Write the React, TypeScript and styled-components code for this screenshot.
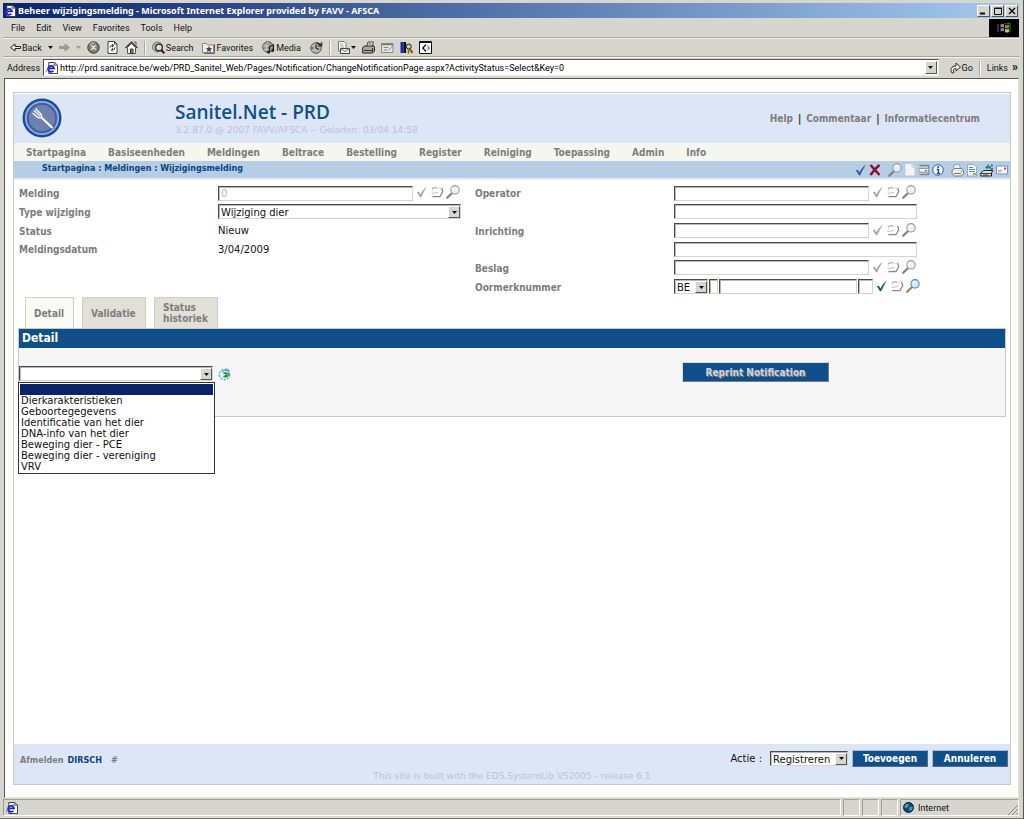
import React from "react";
import styled, { createGlobalStyle, css } from "styled-components";

const pageFont = '"DejaVu Sans", Verdana, sans-serif';
const condensedFont = '"DejaVu Sans Condensed", "DejaVu Sans", Verdana, sans-serif';
const titleFont = '"Noto Sans", Tahoma, sans-serif';
const chromeFont = 'Roboto, Tahoma, sans-serif';

const c = {
  chrome: "#d6d6ce",
  navy: "#0a246a",
  blue: "#10508a",
  pale: "#dde6f7",
  crumb: "#b5cee6",
  label: "#7d7d7d",
  line: "#c8cac2",
};

const GlobalStyle = createGlobalStyle`
  *, *::before, *::after { box-sizing: border-box; }
  body { margin: 0; background: ${c.chrome}; font-family: ${pageFont}; font-size: 10px; color: #111; }
  a { color: inherit; text-decoration: none; }
  button, input, select { font: inherit; margin: 0; border-radius: 0; }
  svg { display: block; flex: none; }
`;

/* ---------- browser window ---------- */

const Window = styled.div`
  display: flex;
  flex-direction: column;
  min-height: 100vh;
  padding: 3px 4px 2px 3px;
  background: ${c.chrome};
  border-right: 1px solid #55554f;
  border-bottom: 1px solid #77776f;
  font-family: ${chromeFont};
  font-size: 9px;
`;

const TitleBar = styled.header`
  display: flex;
  align-items: center;
  gap: 2px;
  height: 15px;
  padding: 0 1px;
  color: #fff;
  background: linear-gradient(to right, #0a246a, #a6caf0);
`;

const WindowTitle = styled.h1`
  flex: 1;
  margin: 0;
  font-family: ${titleFont};
  font-size: 9px;
  line-height: 15px;
  font-weight: 700;
  white-space: nowrap;
`;

const raised = css`
  background: ${c.chrome};
  border: 1px solid;
  border-color: #fff #55554f #55554f #fff;
`;

const WindowButton = styled.button`
  ${raised}
  display: grid;
  place-items: center;
  width: 13px;
  height: 12px;
  padding: 0;
  & + & { margin-left: -1px; }
`;

const MenuRow = styled.div`
  display: flex;
  align-items: stretch;
  height: 20px;
  border-bottom: 1px solid #a5a59d;
`;

const MenuBar = styled.nav`
  display: flex;
  flex: 1;
  align-items: center;
  gap: 11px;
  padding-left: 8px;
`;

const FlagBox = styled.div`
  display: grid;
  place-items: center;
  width: 30px;
  margin-top: 1px;
  background: #000;
`;

const PlainButton = styled.button`
  display: flex;
  align-items: center;
  gap: 1px;
  padding: 0;
  border: 0;
  background: none;
  color: inherit;
  white-space: nowrap;
`;

const Toolbar = styled.div`
  display: flex;
  align-items: center;
  gap: 6px;
  height: 19px;
  padding-left: 7px;
  border-top: 1px solid #f4f4f0;
  border-bottom: 1px solid #a5a59d;
`;

const ToolGroup = styled.div<{ $gap: number }>`
  display: flex;
  align-items: center;
  gap: ${(p) => p.$gap}px;
`;

const Divider = styled.span`
  width: 2px;
  height: 14px;
  border-left: 1px solid #a5a59d;
  border-right: 1px solid #fff;
`;

const AddressRow = styled.form`
  display: flex;
  align-items: center;
  gap: 3px;
  height: 20px;
  margin-bottom: 1px;
  padding: 1px 1px 1px 4px;
  border-top: 1px solid #f4f4f0;
`;

const AddressField = styled.div`
  display: flex;
  flex: 1;
  align-items: center;
  height: 17px;
  padding-left: 2px;
  background: #fff;
  border: 1px solid;
  border-color: #55554f #eee #eee #55554f;
`;

const AddressInput = styled.input`
  flex: 1;
  min-width: 0;
  padding: 0 2px;
  border: 0;
  background: transparent;
  outline: 0;
`;

const DropButton = styled.button`
  ${raised}
  display: grid;
  place-items: center;
  width: 12px;
  height: 13px;
  margin-right: 1px;
  padding: 0;
`;

const GoArea = styled.div`
  display: flex;
  align-items: center;
  gap: 6px;
  padding-left: 8px;
`;

const LinksMark = styled.b`
  align-self: flex-start;
  margin-left: 3px;
  font-size: 12px;
  line-height: 8px;
`;

const Viewport = styled.main`
  display: flex;
  flex: 1;
  flex-direction: column;
  margin-left: 1px;
  padding: 13px 7px 12px 8px;
  background: #fff;
  border: 1px solid;
  border-color: #55554f #e4e4dc #e4e4dc #55554f;
  font-family: ${pageFont};
  font-size: 10px;
`;

const StatusBar = styled.footer`
  display: flex;
  gap: 2px;
  height: 17px;
  margin-top: 1px;
`;

const StatusCell = styled.div<{ $width?: number }>`
  display: flex;
  align-items: center;
  gap: 4px;
  padding-left: 2px;
  border: 1px solid;
  border-color: #a0a098 #fff #fff #a0a098;
  ${(p) => (p.$width ? `width: ${p.$width}px;` : "flex: 1;")}
`;

const Grip = styled.svg`
  align-self: flex-end;
  margin-left: auto;
`;

/* ---------- Sanitel page ---------- */

const Frame = styled.div`
  display: flex;
  flex: 1;
  flex-direction: column;
  border: 1px solid ${c.line};
`;

const Banner = styled.header`
  display: flex;
  align-items: flex-start;
  height: 49px;
  margin-top: 1px;
  padding: 4px 30px 0 8px;
  background: ${c.pale};
`;

const Brand = styled.div`
  flex: 1;
  padding: 4px 0 0 113px;
`;

const BrandTitle = styled.h2`
  margin: 0;
  color: ${c.blue};
  font: 600 19px/20px "Open Sans", "Trebuchet MS", sans-serif;
`;

const FaintText = styled.p`
  margin: 0;
  padding-top: 2px;
  color: #bcc3cf;
  font-size: 9px;
  line-height: 12px;
`;

const BannerLinks = styled.div`
  display: flex;
  gap: 5px;
  padding-top: 15px;
  color: #222;
  font-family: ${condensedFont};
  font-weight: 700;
`;

const GreyLink = styled.a`
  color: ${c.label};
  font-family: ${condensedFont};
  font-weight: 700;
  white-space: nowrap;
`;

const NavBar = styled.nav`
  display: flex;
  align-items: center;
  gap: 22px;
  height: 18px;
  padding-left: 12px;
  background: #f6f6f0;
`;

const CrumbBar = styled.div`
  display: flex;
  align-items: center;
  justify-content: space-between;
  height: 19px;
  padding: 0 2px 0 28px;
  background: ${c.crumb};
  border-bottom: 2px solid #e4edf8;
`;

const Crumbs = styled.nav`
  padding-bottom: 3px;
  color: #0c4280;
  font-size: 8px;
  font-weight: 700;
`;

const IconRow = styled.div<{ $gap?: number }>`
  display: flex;
  align-items: center;
  gap: ${(p) => p.$gap ?? 1}px;
`;

const IconButton = styled.button`
  display: block;
  padding: 0;
  border: 0;
  background: none;
`;

const FormArea = styled.form`
  display: grid;
  grid-template-columns: 456px 1fr;
  padding: 4px 5px 0;
`;

const FormColumn = styled.div`
  display: grid;
  grid-template-rows: repeat(6, 1fr);
  height: 112px;
`;

const FormRow = styled.div`
  display: flex;
  align-items: center;
`;

const FieldLabel = styled.label`
  width: 199px;
  padding-top: 1px;
  color: ${c.label};
  font-family: ${condensedFont};
  font-weight: 700;
`;

const sunken = css`
  height: 15px;
  background: #fff;
  border: 1px solid;
  border-color: #4a4a4a #d4d4d0 #d4d4d0 #4a4a4a;
  box-shadow: inset 1px 1px 0 #b8b8b4;
`;

const TextInput = styled.input<{ $width: number }>`
  ${sunken}
  width: ${(p) => p.$width}px;
  padding: 0 2px;
  color: #111;
  &:disabled { color: #b4b4b4; }
`;

const SelectWrap = styled.span<{ $width: number }>`
  ${sunken}
  position: relative;
  display: block;
  width: ${(p) => p.$width}px;
`;

const NativeSelect = styled.select`
  display: block;
  width: 100%;
  height: 14px;
  padding: 1px 12px 0 2px;
  border: 0;
  appearance: none;
  background: transparent;
  color: #111;
`;

const SelectArrow = styled.span`
  ${raised}
  position: absolute;
  top: 1px;
  right: 0;
  display: grid;
  place-items: center;
  width: 12px;
  height: 12px;
  pointer-events: none;
`;

const FieldIcons = styled.div`
  display: flex;
  align-items: center;
  gap: 2px;
  margin-left: 3px;
  padding-bottom: 2px;
`;

const Joined = styled.div`
  display: flex;
  gap: 1px;
`;

const Tabs = styled.div`
  display: flex;
  gap: 8px;
  padding: 1px 11px 0;
`;

const Tab = styled.button<{ $active?: boolean }>`
  min-width: ${(p) => (p.$active ? 49 : 64)}px;
  height: 31px;
  padding: 0 8px;
  border: 1px solid #d0d0c4;
  border-bottom: 0;
  background: ${(p) => (p.$active ? "#fafaf6" : "#e2dfd6")};
  color: ${c.label};
  font-family: ${condensedFont};
  font-weight: 700;
  line-height: 11px;
  text-align: left;
`;

const Panel = styled.section`
  margin: 0 4px;
  border: 1px solid ${c.line};
  background: #f6f6f6;
`;

const PanelTitle = styled.h3`
  margin: 0;
  padding-left: 3px;
  background: ${c.blue};
  color: #fff;
  font: 700 12px/19px ${condensedFont};
`;

const PanelBody = styled.div`
  display: grid;
  grid-template-columns: 663px 1fr;
  align-items: start;
  height: 68px;
  padding-top: 14px;
`;

const DetailPicker = styled.div`
  position: relative;
  display: flex;
  align-items: center;
  gap: 5px;
  padding-top: 4px;
`;

const OptionList = styled.ul`
  position: absolute;
  z-index: 1;
  top: 20px;
  left: -1px;
  width: 197px;
  margin: 0;
  padding: 1px;
  border: 1px solid #333;
  background: #fff;
  list-style: none;
`;

const Option = styled.li<{ $selected?: boolean }>`
  height: 11px;
  padding-left: 1px;
  background: ${(p) => (p.$selected ? c.navy : "transparent")};
  line-height: 12px;
`;

const BlueButton = styled.button<{ $width: number; $muted?: boolean }>`
  width: ${(p) => p.$width}px;
  height: ${(p) => (p.$muted ? 20 : 17)}px;
  padding: 0;
  border: 1px solid;
  border-color: ${(p) => (p.$muted ? "#dcdcdc #7c7c7c #7c7c7c #dcdcdc" : "#a8c0dc #5c6c80 #5c6c80 #a8c0dc")};
  background: ${c.blue};
  color: ${(p) => (p.$muted ? "#d0d4d8" : "#fff")};
  font-family: ${condensedFont};
  font-weight: 700;
  text-shadow: ${(p) => (p.$muted ? "1px 1px 0 #7c8088" : "none")};
`;

const PageFooter = styled.footer`
  margin-top: auto;
  background: ${c.pale};
`;

const FooterMain = styled.div`
  display: flex;
  align-items: center;
  justify-content: space-between;
  height: 24px;
  padding: 4px 2px 0 6px;
`;

const BuildNote = styled(FaintText)`
  padding-bottom: 2px;
  text-align: center;
`;

const UserInfo = styled.div`
  display: flex;
  gap: 4px;
  padding-top: 4px;
  color: ${c.label};
  font-family: ${condensedFont};
  font-size: 9px;
  font-weight: 700;
`;

const UserName = styled.strong`
  margin-right: 5px;
  color: #0c4280;
`;

const Actions = styled.div`
  display: flex;
  align-items: center;
  gap: 4px;
`;

const ActionLabel = styled.label`
  margin-right: 4px;
`;

/* ---------- drawings ---------- */

const Caret = ({ color = "#111" }: { color?: string }) => (
  <svg width="5" height="3" viewBox="0 0 5 3"><path d="M0 0h5L2.5 3z" fill={color} /></svg>
);

const PageE = ({ size = 13 }: { size?: number }) => (
  <svg width={size} height={size} viewBox="0 0 13 13">
    <path d="M3 .5h6.500l3 3v9H3z" fill="#fff" stroke="#333" />
    <path d="M9.500 .5v3h3" fill="none" stroke="#555" />
    <path d="M8 9.500A3.200 3.200 0 1 1 8.700 6.900H3" fill="none" stroke="#2020c8" strokeWidth="2" />
    <path d="M.6 10.500C1 7 5 3.200 9.500 3.200" fill="none" stroke="#3c50e0" />
  </svg>
);

const Flag = () => (
  <svg width="14" height="12" viewBox="0 0 14 12">
    <path d="M3.500 2.500q2-1.500 3.500 0v3.200q-2-1.300-3.500 0z" fill="#d87048" />
    <path d="M8 2.700q2 1.200 4-.2v3.200q-2 1.300-4 .2z" fill="#58a048" />
    <path d="M3.500 6.600q2-1.300 3.500 0v3q-1.800-1.300-3.500 0z" fill="#6888d8" />
    <path d="M8 6.700q2 1.300 4 0v3.200q-2 1.200-4 0z" fill="#d8c050" />
    <path d="M0 3h2M0 5h2M0 7h2M0 9h2" stroke="#785888" />
    <path d="M7.500 1.500q2 1.200 5.500-.5v9" fill="none" stroke="#487838" />
  </svg>
);

const Arrow = ({ flip = false, color = "#222" }: { flip?: boolean; color?: string }) => (
  <svg width="11" height="9" viewBox="0 0 11 9">
    <path
      d={flip ? "M.5 3.500h5.500V1l4.500 3.500L6 8V5.500H.5z" : "M10.500 3.500H5V1L.5 4.500 5 8V5.500h5.500z"}
      fill={flip ? color : "#f4f4f0"}
      stroke={color}
    />
  </svg>
);

const tools: Record<string, React.ReactNode> = {
  stop: (<>
    <circle cx="6.500" cy="6.500" r="5.700" fill="#80807c" stroke="#333" />
    <path d="M2.500 4q2-3 5-2" stroke="#ddd" fill="none" />
    <path d="M4.300 4.300l4.400 4.400m0-4.400L4.300 8.700" stroke="#e8e8e8" strokeWidth="1.300" />
  </>),
  refresh: (<>
    <path d="M2 .5h6.500l2.500 2.500v9.500H2z" fill="#fff" stroke="#444" />
    <path d="M8.500 .5V3H11" stroke="#444" fill="none" />
    <path d="M4 6.500q.3-2.300 3.200-2M6 3l1.700 1.500L6 6M9 6.500Q8.700 9.200 5.800 8.800M7 7.300L5.300 8.800 7 10.500" stroke="#333" fill="none" />
  </>),
  home: (<>
    <path d="M2.500 6.500v6h8v-6l-4-4z" fill="#fff" stroke="#555" />
    <path d="M.5 7l6-6 6 6" fill="none" stroke="#333" strokeWidth="1.200" />
    <path d="M9 1h2v3.500" fill="none" stroke="#555" />
    <path d="M5.500 8h2.500v4.500H5.500z" fill="#888" stroke="#333" />
  </>),
  search: (<>
    <circle cx="5.500" cy="6" r="5" fill="#b4b4ac" stroke="#777" />
    <path d="M2 3q3 0 2 3t1 4M8 1q-2 3 2 4" stroke="#888" fill="none" />
    <circle cx="7" cy="6.500" r="3.300" fill="#ddd" stroke="#222" strokeWidth="1.200" />
    <path d="M9.300 9l3 3.300" stroke="#222" strokeWidth="2" />
  </>),
  favorites: (<>
    <path d="M.5 2.500h4l1 1.500h6v7.500H.5z" fill="#eee" stroke="#888" />
    <path d="M12.500 3v9.500H2" stroke="#666" fill="none" />
    <path d="M7 5l.9 2 2.300.3-1.700 1.500.5 2.300L7 10l-2 1.100.5-2.300L3.800 7.300 6.100 7z" fill="#444" />
  </>),
  media: (<>
    <circle cx="6" cy="6" r="5.300" fill="#9c9c96" stroke="#555" />
    <path d="M1 5h10M2 9h8M6 1q-4 5 0 10" stroke="#ccc" fill="none" />
    <path d="M7.500 11V5.500l4-1.500v5.500" stroke="#222" fill="none" strokeWidth="1.200" />
    <circle cx="6.600" cy="11" r="1.600" fill="#222" /><circle cx="10.600" cy="9.500" r="1.500" fill="#222" />
  </>),
  history: (<>
    <circle cx="6" cy="7" r="5.300" fill="#b8b8b2" stroke="#555" />
    <path d="M6 3.500V7l3 1.500M1.500 7h2" stroke="#222" fill="none" strokeWidth="1.200" />
    <path d="M12.300 .5v5h-5l1.700-1.600L6 2.500l1-1.300L10.500 2.500z" fill="#333" />
  </>),
  mail: (<>
    <path d="M1.500 .5h5.500l2 2v7.500h-7.500z" fill="#fff" stroke="#777" />
    <path d="M3 3h3M3 5h4M3 7h4" stroke="#999" />
    <path d="M3.500 7.500h9v5h-9z" fill="#eee" stroke="#444" /><path d="M3.500 7.500L8 10.500l4.500-3" stroke="#777" fill="none" />
  </>),
  print: (<>
    <path d="M4.500 6L6 1h5.500L10 6z" fill="#fff" stroke="#444" />
    <path d="M.7 6.500L3 5h9l.5 1.500v3.500l-2 2h-9.800z" fill="#a8a8a4" stroke="#222" />
    <path d="M2 9.500h8M6.500 3H9.500" stroke="#333" /><path d="M10.500 7v4.500" stroke="#333" />
  </>),
  edit: (<>
    <path d="M.5 2.500h11.500v9H.5z" fill="#e8e8e4" stroke="#888" />
    <path d="M.5 3.500h11.500" stroke="#777" strokeWidth="1.500" />
    <path d="M2.500 6.500h5M2.500 9h4M7.500 9.500l4.500-5" stroke="#888" />
  </>),
  research: (<>
    <path d="M.5 1h3v11h-3z" fill="#1428c8" /><path d="M3.500 1H6v11H3.500z" fill="#111" />
    <path d="M6 2h1.500v10H6z" fill="#e8d020" />
    <circle cx="8.800" cy="5.500" r="2.500" fill="#a8d8d0" stroke="#222" /><path d="M10 8l2.500 4" stroke="#c82818" strokeWidth="2" />
    <path d="M8.500 8.500v4" stroke="#208830" strokeWidth="1.500" />
  </>),
  discuss: (<>
    <path d="M.5 .5h12v12H.5z" fill="#fff" stroke="#111" /><path d="M.5 1.500h12" stroke="#111" />
    <path d="M7 3.500L3.800 7 7 10.500" fill="none" stroke="#111" strokeWidth="1.300" /><path d="M7.500 7h3M8.500 4.500l2 2.500-2 2.500" stroke="#777" fill="none" />
  </>),
};

const Tool = ({ name }: { name: string }) => (
  <svg width="13" height="13" viewBox="0 0 13 13">{tools[name]}</svg>
);

const Logo = () => (
  <svg width="40" height="40" viewBox="0 0 40 40">
    <circle cx="20" cy="20" r="19.500" fill="#1c4d94" />
    <circle cx="20" cy="20" r="16.300" fill="#5d78b0" stroke="#8fb4ea" strokeWidth="1.500" />
    <circle cx="20" cy="20" r="14" fill="#6e80ae" stroke="#3c5c9c" strokeWidth="1.500" />
    <path d="M19 19L30.500 30" stroke="#fff" strokeWidth="2" />
    <path d="M10.500 15l5.500 4.500q2 .8 3-.2t0-3.200L13.500 10.500M12 12.500l6 5.500" fill="none" stroke="#f2f5fb" strokeWidth="1.500" />
  </svg>
);

const Check = ({ color = "#a8a8a8" }: { color?: string }) => (
  <svg width="12" height="12" viewBox="0 0 12 12">
    <path d="M.8 6.300l2-.5L4.500 8.600C5.500 6 7.500 3 11 .6 8.800 4 6.800 7.500 5.200 11.300H4z" fill={color} />
  </svg>
);

const Folder = () => (
  <svg width="14" height="12" viewBox="0 0 14 12">
    <path d="M2.500 5.500L2 2.500l4-1 1 .8 4.500-.5 1 3.500-2.500 5H2" fill="#fdfdfd" stroke="#dadada" />
    <path d="M2 2.500l4-1 1 .8" fill="none" stroke="#a8a8a8" />
    <path d="M1.500 7.500l6.500-1" stroke="#c0c0c0" />
    <path d="M2.500 10.700h7.500l2.700-5-1-3.500" stroke="#888" fill="none" strokeWidth="1.200" />
  </svg>
);

const Lens = ({ rim = "#9a9a9a", handle = "#808080", glass = "#f0f2f4" }) => (
  <svg width="14" height="14" viewBox="0 0 14 14">
    <path d="M5.800 8.200L1.200 12.800" stroke={handle} strokeWidth="2.200" strokeLinecap="round" />
    <circle cx="9" cy="4.800" r="4.200" fill={glass} stroke={rim} strokeWidth="1.100" />
    <path d="M7 4.500q.5-2 2.500-2" stroke="#fff" fill="none" />
  </svg>
);

const Cross = () => (
  <svg width="12" height="12" viewBox="0 0 12 12">
    <path d="M1.500 1l9 10M10.500 1Q6 4.500 1.500 11" stroke="#8c0c34" strokeWidth="2.500" fill="none" />
  </svg>
);

const Sheet = () => (
  <svg width="12" height="14" viewBox="0 0 12 14"><path d="M1.500 1h6.500l3 3v9H1.500z" fill="#f4f5f2" /><path d="M8 1v3h3M11 4v9H1.500" stroke="#c4c8c8" fill="none" /></svg>
);

const Drive = () => (
  <svg width="12" height="12" viewBox="0 0 12 12">
    <path d="M1.500 1.500h9v9h-9" fill="none" stroke="#84848c" strokeWidth="1.500" />
    <path d="M1 4.500h9.500v3.500H1z" fill="#f6f6f6" stroke="#9898a0" /><path d="M7 6.500h2" stroke="#c04040" />
  </svg>
);

const Info = () => (
  <svg width="12" height="12" viewBox="0 0 12 12">
    <circle cx="6" cy="6" r="5.300" fill="#f6f9ff" stroke="#3a60b4" />
    <path d="M4.800 5.500H6.500v4M4.800 9.500h3.200" stroke="#1c3ca8" fill="none" strokeWidth="1.300" /><circle cx="6.200" cy="3" r="1" fill="#1c3ca8" />
  </svg>
);

const PrinterSmall = () => (
  <svg width="13" height="14" viewBox="0 0 13 14">
    <path d="M3 7l-.5-5L8 1l2 5.500z" fill="#e4f0fc" stroke="#8ca4c4" />
    <path d="M1 8l2-2.500h8L12.500 8v3L10 13H3.500L1 11z" fill="#ececec" stroke="#808080" />
    <path d="M3 10.500h7" stroke="#777" /><circle cx="10.500" cy="8.500" r=".8" fill="#58a048" />
  </svg>
);

const Report = () => (
  <svg width="12" height="14" viewBox="0 0 12 14">
    <path d="M1.500 1.500h6.500l2.500 2.500v9h-9z" fill="#f4f9ff" stroke="#90a8cc" />
    <path d="M3 4.500h4M3 6.500h6M3 8.500h6" stroke="#4c88cc" /><path d="M7 10h3v2H7z" fill="#b8a838" />
  </svg>
);

const Router = () => (
  <svg width="14" height="14" viewBox="0 0 14 14">
    <path d="M.8 10l3-2.500h9L11.500 10v3H.8z" fill="#e0e0d8" stroke="#222" /><path d="M1 10.500h10M3 12h5" stroke="#444" />
    <path d="M5 4.500l4-3.500v2.500l3-1-2 4-1-1.500-2 1z" fill="#108898" /><path d="M11 1.500l2 1.500M10.500 6.500l2.500-1" stroke="#108898" strokeWidth="1.500" />
  </svg>
);

const Envelope = () => (
  <svg width="12" height="10" viewBox="0 0 12 10">
    <path d="M.5 1h11v8H.5z" fill="#f8faff" stroke="#7890bc" /><path d="M2 5.500h4M2 7h3" stroke="#a0a8b8" /><path d="M8 2.500h2v2H8z" fill="#d03838" />
  </svg>
);

const Recycle = () => (
  <svg width="14" height="14" viewBox="0 0 14 14">
    <circle cx="6.500" cy="7.500" r="5.300" fill="#e8f4f4" stroke="#3c6cac" strokeDasharray="2 1.500" />
    <path d="M4 5q3-3.500 6-1M9 1.500l2.500 3" stroke="#3c80c0" fill="none" />
    <path d="M5.500 6.500q3-1.500 3 .5T5.500 9.800H9l2-2.300" stroke="#18a050" strokeWidth="1.600" fill="none" /><path d="M9 5.500l3 .5-2 2.500z" fill="#18a050" />
  </svg>
);

const Globe = () => (
  <svg width="11" height="11" viewBox="0 0 11 11">
    <circle cx="5.500" cy="5.500" r="5" fill="#1838a8" stroke="#101c50" />
    <path d="M2 2.500l3-1 1 2-2 2.500-2.500-.5zM7 4.500l3 .5-1 3-2.500 1-.5-2.500z" fill="#38b058" />
  </svg>
);

/* ---------- composed parts ---------- */

const Select = ({ id, width, options, label }: { id?: string; width: number; options: string[]; label?: string }) => (
  <SelectWrap $width={width}>
    <NativeSelect id={id} aria-label={label}>
      {options.map((o) => <option key={o}>{o}</option>)}
    </NativeSelect>
    <SelectArrow><Caret /></SelectArrow>
  </SelectWrap>
);

const LookupIcons = ({ active = false }: { active?: boolean }) => (
  <FieldIcons>
    <IconButton type="button" aria-label="Valideren"><Check color={active ? "#1c5494" : undefined} /></IconButton>
    <IconButton type="button" aria-label="Openen"><Folder /></IconButton>
    <IconButton type="button" aria-label="Zoeken">
      {active ? <Lens rim="#4888c8" handle="#b07850" glass="#cfe8fa" /> : <Lens />}
    </IconButton>
  </FieldIcons>
);

const browserMenu = ["File", "Edit", "View", "Favorites", "Tools", "Help"];
const siteMenu = ["Startpagina", "Basiseenheden", "Meldingen", "Beltrace", "Bestelling", "Register", "Reiniging", "Toepassing", "Admin", "Info"];
const detailOptions = ["", "Dierkarakteristieken", "Geboortegegevens", "Identificatie van het dier", "DNA-info van het dier", "Beweging dier - PCE", "Beweging dier - vereniging", "VRV"];

const BrowserToolbar = () => (
  <Toolbar>
    <ToolGroup $gap={6}>
      <PlainButton><Arrow />Back</PlainButton>
      <Caret />
      <PlainButton aria-label="Forward"><Arrow flip color="#999" /></PlainButton>
      <Caret color="#999" />
      <IconButton aria-label="Stop"><Tool name="stop" /></IconButton>
      <IconButton aria-label="Refresh"><Tool name="refresh" /></IconButton>
      <IconButton aria-label="Home"><Tool name="home" /></IconButton>
    </ToolGroup>
    <Divider />
    <ToolGroup $gap={9}>
      <PlainButton><Tool name="search" />Search</PlainButton>
      <PlainButton><Tool name="favorites" />Favorites</PlainButton>
      <PlainButton><Tool name="media" />Media</PlainButton>
      <IconButton aria-label="History"><Tool name="history" /></IconButton>
    </ToolGroup>
    <Divider />
    <ToolGroup $gap={6}>
      <PlainButton aria-label="Mail"><Tool name="mail" /><Caret /></PlainButton>
      <IconButton aria-label="Print"><Tool name="print" /></IconButton>
      <IconButton aria-label="Edit"><Tool name="edit" /></IconButton>
      <IconButton aria-label="Research"><Tool name="research" /></IconButton>
      <IconButton aria-label="Discuss"><Tool name="discuss" /></IconButton>
    </ToolGroup>
  </Toolbar>
);

const NotificationForm = () => (
  <FormArea>
    <FormColumn>
      <FormRow>
        <FieldLabel htmlFor="melding">Melding</FieldLabel>
        <TextInput id="melding" $width={195} defaultValue="0" disabled />
        <LookupIcons />
      </FormRow>
      <FormRow>
        <FieldLabel htmlFor="type">Type wijziging</FieldLabel>
        <Select id="type" width={243} options={["Wijziging dier"]} />
      </FormRow>
      <FormRow><FieldLabel as="span">Status</FieldLabel>Nieuw</FormRow>
      <FormRow><FieldLabel as="span">Meldingsdatum</FieldLabel>3/04/2009</FormRow>
    </FormColumn>
    <FormColumn>
      <FormRow>
        <FieldLabel htmlFor="operator">Operator</FieldLabel>
        <TextInput id="operator" $width={195} />
        <LookupIcons />
      </FormRow>
      <FormRow>
        <FieldLabel as="span" />
        <TextInput aria-label="Operator naam" $width={243} />
      </FormRow>
      <FormRow>
        <FieldLabel htmlFor="inrichting">Inrichting</FieldLabel>
        <TextInput id="inrichting" $width={195} />
        <LookupIcons />
      </FormRow>
      <FormRow>
        <FieldLabel as="span" />
        <TextInput aria-label="Inrichting naam" $width={243} />
      </FormRow>
      <FormRow>
        <FieldLabel htmlFor="beslag">Beslag</FieldLabel>
        <TextInput id="beslag" $width={195} />
        <LookupIcons />
      </FormRow>
      <FormRow>
        <FieldLabel htmlFor="oormerk">Oormerknummer</FieldLabel>
        <Joined>
          <Select width={34} options={["BE"]} label="Landcode" />
          <TextInput aria-label="Voorvoegsel" $width={9} />
          <TextInput id="oormerk" $width={138} />
          <TextInput aria-label="Achtervoegsel" $width={15} />
        </Joined>
        <LookupIcons active />
      </FormRow>
    </FormColumn>
  </FormArea>
);

export default function App() {
  return (
    <>
      <GlobalStyle />
      <Window>
        <TitleBar>
          <PageE size={12} />
          <WindowTitle>Beheer wijzigingsmelding - Microsoft Internet Explorer provided by FAVV - AFSCA</WindowTitle>
          <WindowButton aria-label="Minimize"><svg width="7" height="8"><path d="M0 6.500h5" stroke="#111" strokeWidth="2" /></svg></WindowButton>
          <WindowButton aria-label="Maximize"><svg width="8" height="8"><path d="M.5 1h7v6.500h-7zM.5 1.500h7" fill="none" stroke="#111" /></svg></WindowButton>
          <WindowButton aria-label="Close"><svg width="8" height="8"><path d="M1 1l6 6M7 1L1 7" stroke="#111" strokeWidth="1.500" /></svg></WindowButton>
        </TitleBar>
        <MenuRow>
          <MenuBar>{browserMenu.map((m) => <PlainButton key={m}>{m}</PlainButton>)}</MenuBar>
          <FlagBox><Flag /></FlagBox>
        </MenuRow>
        <BrowserToolbar />
        <AddressRow>
          <label htmlFor="address">Address</label>
          <AddressField>
            <PageE size={12} />
            <AddressInput id="address" defaultValue="http://prd.sanitrace.be/web/PRD_Sanitel_Web/Pages/Notification/ChangeNotificationPage.aspx?ActivityStatus=Select&Key=0" />
            <DropButton type="button" aria-label="Show addresses"><Caret /></DropButton>
          </AddressField>
          <GoArea>
            <PlainButton type="button">
              <svg width="11" height="12" viewBox="0 0 11 12"><path d="M2 11Q-1 6 4 4h2V1l4.500 4L6 9V6.500Q2 6.500 4 10.500z" fill="#f0f0ec" stroke="#333" /></svg>
              Go
            </PlainButton>
            <Divider />
            <PlainButton type="button">Links<LinksMark>»</LinksMark></PlainButton>
          </GoArea>
        </AddressRow>

        <Viewport>
          <Frame>
            <Banner>
              <Logo />
              <Brand>
                <BrandTitle>Sanitel.Net - PRD</BrandTitle>
                <FaintText>3.2.87.0 @ 2007 FAVV/AFSCA -- Geladen: 03/04 14:58</FaintText>
              </Brand>
              <BannerLinks>
                <GreyLink href="#help">Help</GreyLink>|
                <GreyLink href="#commentaar">Commentaar</GreyLink>|
                <GreyLink href="#informatiecentrum">Informatiecentrum</GreyLink>
              </BannerLinks>
            </Banner>
            <NavBar>{siteMenu.map((m) => <GreyLink key={m} href={`#${m}`}>{m}</GreyLink>)}</NavBar>
            <CrumbBar>
              <Crumbs>
                <a href="#start">Startpagina</a> : <a href="#meldingen">Meldingen</a> : <a href="#wijziging">Wijzigingsmelding</a>
              </Crumbs>
              <IconRow $gap={7}>
                <IconRow $gap={2}><Check color="#2c5c9c" /><Cross /></IconRow>
                <IconRow $gap={2}><Lens glass="#e4eef8" /><Sheet /><Drive /><Info /></IconRow>
                <IconRow $gap={2}><PrinterSmall /><Report /><Router /><Envelope /></IconRow>
              </IconRow>
            </CrumbBar>

            <NotificationForm />

            <Tabs role="tablist">
              <Tab role="tab" $active>Detail</Tab>
              <Tab role="tab">Validatie</Tab>
              <Tab role="tab">Status<br />historiek</Tab>
            </Tabs>
            <Panel>
              <PanelTitle>Detail</PanelTitle>
              <PanelBody>
                <DetailPicker>
                  <Select width={194} options={[""]} label="Detail" />
                  <IconButton aria-label="Vernieuwen"><Recycle /></IconButton>
                  <OptionList role="listbox" aria-label="Detail">
                    {detailOptions.map((o, i) => (
                      <Option key={o} role="option" aria-selected={i === 0} $selected={i === 0}>{o}</Option>
                    ))}
                  </OptionList>
                </DetailPicker>
                <BlueButton $width={147} $muted>Reprint Notification</BlueButton>
              </PanelBody>
            </Panel>

            <PageFooter>
              <FooterMain>
                <UserInfo>
                  <a href="#afmelden">Afmelden</a>
                  <UserName>DIRSCH</UserName>
                  #
                </UserInfo>
                <Actions>
                  <ActionLabel htmlFor="actie">Actie :</ActionLabel>
                  <Select id="actie" width={78} options={["Registreren"]} />
                  <BlueButton $width={76}>Toevoegen</BlueButton>
                  <BlueButton $width={76}>Annuleren</BlueButton>
                </Actions>
              </FooterMain>
              <BuildNote>This site is built with the EDS.SystemLib VS2005 - release 6.1</BuildNote>
            </PageFooter>
          </Frame>
        </Viewport>

        <StatusBar>
          <StatusCell><PageE size={12} /></StatusCell>
          <StatusCell $width={17} />
          <StatusCell $width={17} />
          <StatusCell $width={17} />
          <StatusCell $width={119}>
            <Globe />Internet
            <Grip width="10" height="10" viewBox="0 0 10 10"><path d="M0 10L10 0M4 10l6-6M8 10l2-2" stroke="#8c8c84" /></Grip>
          </StatusCell>
        </StatusBar>
      </Window>
    </>
  );
}
